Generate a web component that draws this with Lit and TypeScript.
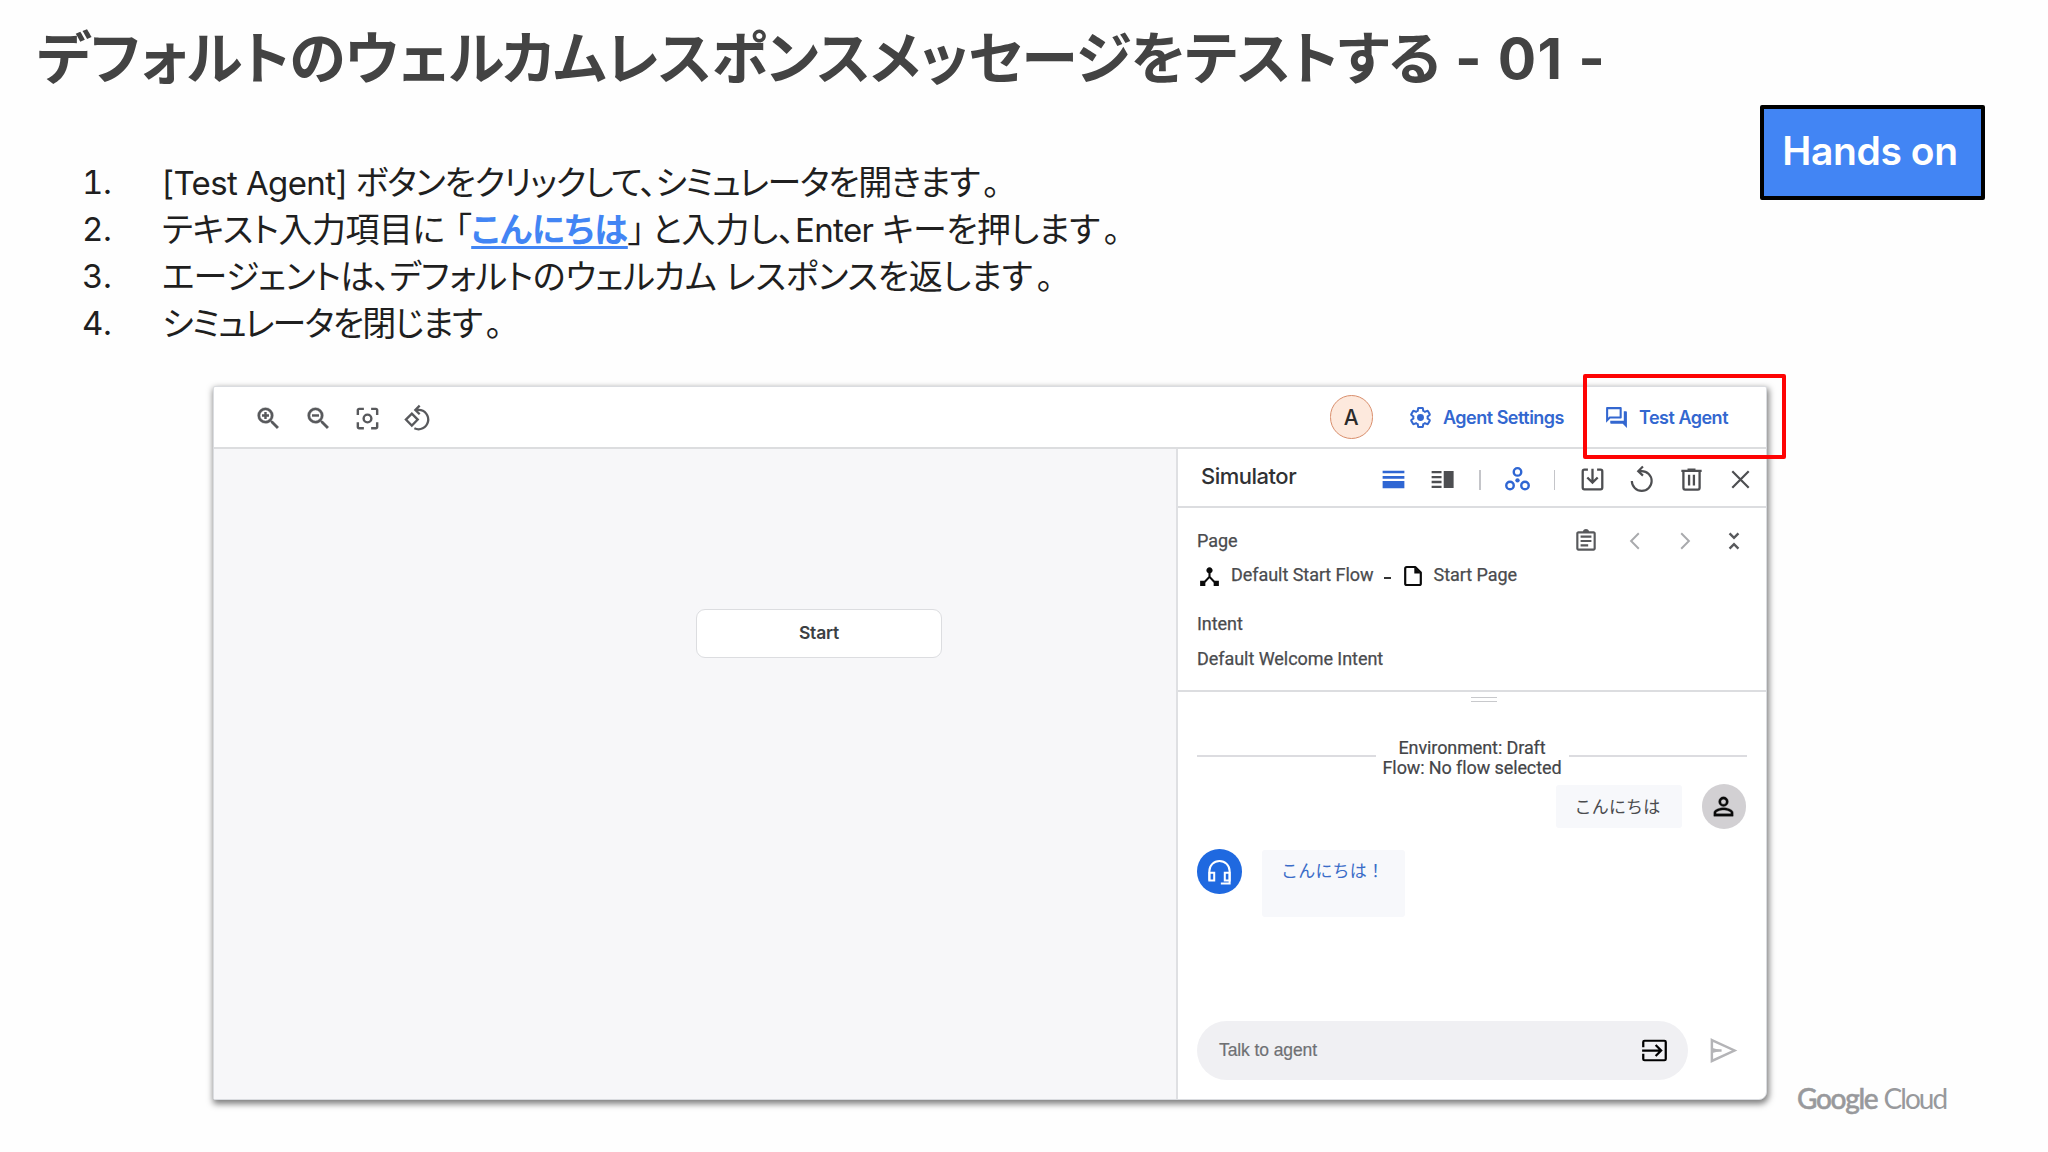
import { LitElement, html, css, svg } from "lit";
import { customElement } from "lit/decorators.js";

const GEAR =
  "M19.43 12.98c.04-.32.07-.64.07-.98s-.03-.66-.07-.98l2.11-1.65c.19-.15.24-.42.12-.64l-2-3.46c-.09-.16-.26-.25-.44-.25-.06 0-.12.01-.17.03l-2.49 1c-.52-.4-1.08-.73-1.69-.98l-.38-2.65C14.46 2.18 14.25 2 14 2h-4c-.25 0-.46.18-.49.42l-.38 2.65c-.61.25-1.17.59-1.69.98l-2.49-1c-.06-.02-.12-.03-.18-.03-.17 0-.34.09-.43.25l-2 3.46c-.13.22-.07.49.12.64l2.11 1.65c-.04.32-.07.65-.07.98s.03.66.07.98l-2.11 1.65c-.19.15-.24.42-.12.64l2 3.46c.09.16.26.25.44.25.06 0 .12-.01.17-.03l2.49-1c.52.4 1.08.73 1.69.98l.38 2.65c.03.24.24.42.49.42h4c.25 0 .46-.18.49-.42l.38-2.65c.61-.25 1.17-.59 1.69-.98l2.49 1c.06.02.12.03.18.03.17 0 .34-.09.43-.25l2-3.46c.12-.22.07-.49-.12-.64l-2.11-1.65z";
const LENS =
  "M15.5 14h-.79l-.28-.27A6.47 6.47 0 0 0 16 9.5 6.5 6.5 0 1 0 9.5 16c1.61 0 3.09-.59 4.23-1.57l.27.28v.79l5 4.99L20.49 19l-4.99-5zm-6 0a4.5 4.5 0 1 1 0-9 4.5 4.5 0 0 1 0 9z";

/* Every icon is drawn on a 24-unit grid. */
const ICONS = {
  zoomIn: svg`<path d=${LENS} stroke="currentColor" stroke-width=".3"/><path d="M8.500 6.600h2v1.900h1.900v2h-1.900v1.900h-2v-1.900H6.600V8.500h1.900z"/>`,
  zoomOut: svg`<path d=${LENS} stroke="currentColor" stroke-width=".3"/><path d="M6.600 8.500h5.800v2H6.600z"/>`,
  focus: svg`<path d="M5 15H3v4c0 1.1.9 2 2 2h4v-2H5v-4zM5 5h4V3H5c-1.1 0-2 .9-2 2v4h2V5zm14-2h-4v2h4v4h2V5c0-1.1-.9-2-2-2zm0 16h-4v2h4c1.1 0 2-.9 2-2v-4h-2v4z"/><circle cx="12" cy="12" r="3.200" fill="none" stroke="currentColor" stroke-width="2"/>`,
  rotate: svg`<g fill="none" stroke="currentColor" stroke-width="1.900"><path d="M7.300 8 12.200 12.900 7.300 17.800 2.400 12.900z"/><path d="M10.500 4.900h2.500a8 8 0 1 1-3.600 15.200M13.800 1.300 10.200 4.900l3.600 3.600"/></g>`,
  gear: svg`<path d=${GEAR} fill="none" stroke="currentColor" stroke-width="2.100"/><circle cx="12" cy="12" r="3.600"/>`,
  forum: svg`<path d="M15 4v7H5.170L4 12.170V4h11m1-2H3c-.55 0-1 .45-1 1v14l4-4h10c.55 0 1-.45 1-1V3c0-.55-.45-1-1-1zm5 4h-2v9H6v2c0 .55.45 1 1 1h11l4 4V7c0-.55-.45-1-1-1z"/>`,
  rows: svg`<path d="M3 4.800h18v2.100H3zM3 9.200h18v2.200H3zM3 13.300h18V19.200H3z"/>`,
  split: svg`<path d="M3 4.900h8.200v1.900H3zM3 9h8.200v1.900H3zM3 13.100h8.200V15H3zM3 17.200h8.200v1.900H3zM13 4.900h8.200v14.200H13z"/>`,
  nodes: svg`<g fill="none" stroke="currentColor" stroke-width="2"><circle cx="12" cy="5.700" r="3.100"/><circle cx="5.800" cy="16.900" r="3.100"/><circle cx="18.200" cy="16.900" r="3.100"/></g><circle cx="12" cy="12.700" r="1.800"/>`,
  save: svg`<g fill="none" stroke="currentColor" stroke-width="1.900"><path d="M8.200 3.900H5.300Q3.900 3.900 3.900 5.300V18.700Q3.900 20.100 5.300 20.100H18.700Q20.100 20.100 20.100 18.700V5.300Q20.100 3.900 18.700 3.900H15.800"/><path d="M12 3v11.300M7.700 10.300 12 14.600l4.300-4.300"/></g>`,
  replay: svg`<g fill="none" stroke="currentColor" stroke-width="1.800"><path d="M4 13.200a8.200 8.200 0 1 0 8.200-8.200H9.300M13.200 1.300 9.300 5.100l3.900 3.700"/></g>`,
  trash: svg`<g fill="none" stroke="currentColor" stroke-width="1.900"><path d="M3.600 4.800h16.800M8.700 3.800h6.600"/><path d="M5.300 5.500V18.900Q5.300 20.300 6.700 20.300H17.300Q18.700 20.300 18.700 18.900V5.500M10 8.100v8.900M14 8.100v8.900"/></g>`,
  close: svg`<path d="M5.200 5.200 18.800 18.800M18.800 5.200 5.200 18.800" fill="none" stroke="currentColor" stroke-width="1.800"/>`,
  clipboard: svg`<path d="M7 15h7v2H7zm0-4h10v2H7zm0-4h10v2H7zm12-4h-4.180C14.400 1.840 13.300 1 12 1c-1.300 0-2.400.84-2.820 2H5c-1.100 0-2 .9-2 2v14c0 1.100.9 2 2 2h14c1.100 0 2-.9 2-2V5c0-1.100-.9-2-2-2zm0 16H5V5h14v14z"/>`,
  prev: svg`<path d="M15.500 4.900 8.400 12l7.100 7.100" fill="none" stroke="currentColor" stroke-width="1.800"/>`,
  next: svg`<path d="M8.500 4.900 15.600 12l-7.100 7.100" fill="none" stroke="currentColor" stroke-width="1.800"/>`,
  collapse: svg`<path d="M7.900 4.900 12 9l4.100-4.100M7.900 19.100 12 15l4.100 4.100" fill="none" stroke="currentColor" stroke-width="2.200"/>`,
  flow: svg`<path d="M17 16l-4-4V8.820C14.160 8.400 15 7.300 15 6c0-1.660-1.340-3-3-3S9 4.340 9 6c0 1.300.84 2.400 2 2.820V12l-4 4H3v5h5v-3.050l4-4.200 4 4.200V21h5v-5h-4z"/>`,
  doc: svg`<path d="M14.200 3H5.800Q4.200 3 4.200 4.600V19.400Q4.200 21 5.800 21H18.200Q19.800 21 19.800 19.400V8.600z" fill="none" stroke="currentColor" stroke-width="2.200" stroke-linejoin="round"/><path d="M13.300 3v6.500h6.300z"/>`,
  person: svg`<path d="M12 5.900a2.100 2.100 0 1 1 0 4.200 2.100 2.100 0 0 1 0-4.200m0 9c2.970 0 6.100 1.460 6.100 2.100v1.100H5.900V17c0-.64 3.130-2.100 6.100-2.100M12 4a4 4 0 1 0 0 8 4 4 0 0 0 0-8zm0 9c-2.670 0-8 1.340-8 4v3h16v-3c0-2.660-5.330-4-8-4z" stroke="currentColor" stroke-width=".3"/>`,
  headset: svg`<g fill="none" stroke="currentColor" stroke-width="1.800"><path d="M3 20V11.600a9 9 0 0 1 18 0V22.600H13.200"/><path d="M3 13.200H7.300V20H3zM16.700 13.200H21V20h-4.300z"/></g>`,
  input: svg`<g fill="none" stroke="currentColor" stroke-width="2"><path d="M2 8.800V3.700Q2 2.500 3.200 2.500H20.800Q22 2.500 22 3.700V20.300Q22 21.500 20.800 21.500H3.200Q2 21.500 2 20.300V15.200" transform="matrix(1 0 0 .92 0 .96)"/><path d="M1 12H18M13 7.100 17.900 12l-4.900 4.900"/></g>`,
  send: svg`<g fill="none" stroke="currentColor" stroke-width="1.900"><path d="M3 3.900 20.500 12 3 20.100zM3 12h7.500"/><path d="M3.500 10 10.500 12 3.500 14z" fill="currentColor" stroke="none"/></g>`,
};

const icon = (name: keyof typeof ICONS, size = 29) =>
  html`<svg class="icon" width=${size} height=${size} viewBox="0 0 24 24" fill="currentColor">${ICONS[name]}</svg>`;

const stop = html`<span class="stop">。</span>`;

@customElement("app-root")
export class AppRoot extends LitElement {
  static styles = css`
    :host {
      display: block; box-sizing: border-box; width: 2048px; height: 1152px; overflow: hidden; position: relative;
      background: #fefefe; color: #202124; font-family: Inter, "Noto Sans CJK JP", sans-serif; white-space: nowrap;
    }
    .icon { display: block; flex: none; }
    .jp { font-feature-settings: "palt"; }
    h1 { margin: 0; padding: 24px 0 0 37px; height: 68px; line-height: 70px; font-size: 57px; font-weight: 700; color: #434343; letter-spacing: -0.5px; }
    .suffix { letter-spacing: 1.3px; }
    .intro { display: flex; justify-content: space-between; align-items: flex-start; height: 294px; padding: 13px 63px 0 82px; box-sizing: border-box; }
    .steps { margin: 0; padding: 54px 0 0; list-style: none; font-size: 34px; line-height: 47px; color: #1f1f1f; }
    .steps li { display: flex; height: 47px; }
    .no { width: 80px; flex: none; font-size: 33px; font-feature-settings: "tnum"; letter-spacing: -0.5px; }
    .latin { font-size: 33px; letter-spacing: -0.6px; }
    .s1 { letter-spacing: -1.3px; }
    .s2 { letter-spacing: -0.5px; }
    .s2b { letter-spacing: -0.1px; }
    .s2c { letter-spacing: -0.6px; }
    .s3a { letter-spacing: -0.8px; }
    .s3 { letter-spacing: -0.3px; }
    .s4 { letter-spacing: -1.7px; }
    .stop { margin-left: 4px; }
    .word { color: #4285f4; font-weight: 700; text-decoration: underline; text-decoration-thickness: 3px; text-underline-offset: 4px; }
    .open { margin-left: 10px; }
    .close { margin-right: 7px; }
    .badge {
      display: flex; align-items: center; justify-content: center; box-sizing: border-box; width: 225px; height: 95px;
      padding: 0 5px 4px 0; border: 4px solid #000; border-radius: 2px; background: #4285f4; color: #fff;
      font-size: 39px; font-weight: 600; letter-spacing: -0.4px;
    }
    .stage { display: flex; align-items: flex-end; padding-left: 213px; }
    .frame {
      display: flex; flex-direction: column; box-sizing: border-box; width: 1554px; height: 714px; background: #fff;
      border: 1px solid #dadce0; border-radius: 2px 2px 8px 2px; box-shadow: 1px 3px 6px 1px rgba(0, 0, 0, 0.5);
    }
    .bar { display: flex; align-items: center; height: 60px; border-bottom: 2px solid #dcdddf; color: #58595c; padding-left: 40px; }
    .tools { display: flex; gap: 20.6px; flex: 1; padding-top: 2px; }
    .agent {
      display: flex; align-items: center; justify-content: center; box-sizing: border-box; width: 43.5px; height: 43.5px;
      border: 1.5px solid #d98e6c; border-radius: 50%; background: #fde9dd; color: #2b2b2b; font-size: 21px; font-weight: 500;
    }
    .action { display: flex; align-items: center; color: #3367d0; font-size: 18px; font-weight: 600; letter-spacing: -0.5px; }
    .settings { margin-left: 36px; gap: 11px; width: 195px; }
    .test { gap: 10px; width: 162px; }
    .body { display: flex; flex: 1; min-height: 0; }
    .canvas {
      display: flex; flex: 1; justify-content: center; align-items: flex-start; box-sizing: border-box;
      padding: 160px 0 0 248px; background: #f7f7f9; border-right: 2px solid #dfe0e3;
    }
    .start {
      display: flex; align-items: center; justify-content: center; box-sizing: border-box; width: 246px; height: 49px;
      border: 1px solid #dcdde0; border-radius: 9px; background: #fff; color: #3c4043;
      font-size: 17.5px; font-weight: 600; letter-spacing: -0.2px; padding-bottom: 2px;
    }
    .sim { display: flex; flex-direction: column; width: 588px; flex: none; }
    .simhead { display: flex; align-items: center; justify-content: space-between; height: 57px; border-bottom: 2px solid #dcdde0; padding: 0 11px 0 23px; color: #4d4e51; }
    .simtitle { font-size: 22px; font-weight: 500; letter-spacing: -0.5px; color: #303134; margin-top: -3px; }
    .blue { color: #2f66d3; }
    .icons { display: flex; align-items: center; }
    .simhead > .icons { padding-top: 4px; }
    .g { gap: 20.5px; }
    .sep { width: 1.5px; height: 20px; background: #c4c5c9; margin: 0 22px 0 22px; }
    .sepb { margin: 0 22.5px 0 22px; }
    .info {
      box-sizing: border-box; height: 184px; border-bottom: 2px solid #dcdde0; padding: 20px 19px 0;
      font: 18px/26px Roboto, sans-serif; color: #4a4b4e; -webkit-text-stroke: 0.25px #4a4b4e; letter-spacing: -0.05px;
    }
    .row { display: flex; justify-content: space-between; height: 35px; align-items: flex-start; }
    .nav { display: flex; gap: 23.3px; align-items: center; color: #58595c; }
    .faint { color: #a9aaad; }
    .crumbs { display: flex; align-items: center; height: 26px; margin: -1px 0 23px; }
    .crumbs svg { color: #0a0a0a; margin-top: 2px; }
    .dash { width: 7px; height: 2px; margin: 5px 10px 0 10px; background: #333; }
    .c1 { margin-left: 9px; }
    .c2 { margin-left: 9px; }
    .chat { display: flex; flex-direction: column; flex: 1; padding: 0 19px; }
    .grip { align-self: center; width: 26px; height: 3px; margin: 5px 0 0 23px; border-top: 1.5px solid #c8c9cc; border-bottom: 1.5px solid #c8c9cc; }
    .env {
      display: flex; align-items: center; margin-top: 36px; height: 40px; font: 18px/19.7px Roboto, sans-serif;
      color: #444548; -webkit-text-stroke: 0.2px #444548; letter-spacing: -0.1px; text-align: center;
    }
    .env::before, .env::after { content: ""; flex: 1; height: 2px; background: #dcdce0; margin-top: -5px; }
    .envtext { width: 193px; }
    .me { display: flex; justify-content: flex-end; align-items: center; margin-top: 6px; padding-right: 1px; gap: 20px; height: 45px; }
    .bubble { box-sizing: border-box; background: #f7f8fb; font-size: 17px; border-radius: 3px; font-family: "Noto Sans CJK JP", sans-serif; }
    .mine { width: 126px; height: 43px; line-height: 41px; padding-left: 19px; color: #4a4b4e; letter-spacing: 0.2px; }
    .avatar { display: flex; align-items: center; justify-content: center; width: 44.5px; height: 44.5px; border-radius: 50%; background: #d2d0d3; color: #0a0a0a; flex: none; }
    .bot { display: flex; gap: 20.5px; margin-top: 20px; }
    .bot .avatar { background: #1f69e0; color: #fff; }
    .theirs { width: 143px; height: 67px; line-height: 39px; margin-top: 1px; padding-left: 19px; color: #3a6cc8; letter-spacing: 0.2px; }
    .compose { display: flex; align-items: center; margin-top: auto; margin-bottom: 19px; gap: 20px; }
    .field {
      display: flex; align-items: center; justify-content: space-between; box-sizing: border-box; width: 491px; height: 59px;
      border-radius: 30px; background: #f0f0f3; padding: 0 20px 0 22px; color: #6f7073; font: 17.5px "Liberation Sans", sans-serif;
      -webkit-text-stroke: 0.2px #6f7073; letter-spacing: -0.1px;
    }
    .field svg { color: #000; }
    .compose > svg { color: #b4b4b7; }
    .brand { display: flex; gap: 6px; margin: 0 0 -16px 30px; font: 28px/36px Lato, sans-serif; letter-spacing: -1.3px; color: #98999c; }
    .brand b { font-weight: 500; -webkit-text-stroke: 0.5px #98999c; }
    .brand span { letter-spacing: -1.9px; }
    .mark { position: absolute; left: 1583px; top: 374px; box-sizing: border-box; width: 203px; height: 85px; border: 4px solid #fe0303; border-radius: 2px; }
  `;

  render() {
    return html`
      <h1><span class="jp">デフォルトのウェルカムレスポンスメッセージをテストする</span><span class="suffix"> - 01 -</span></h1>
      <section class="intro">
        <ol class="steps">
          <li><span class="no">1.</span><span><span class="latin">[Test Agent] </span><span class="jp s1">ボタンをクリックして、シミュレータを開きます${stop}</span></span></li>
          <li><span class="no">2.</span><span><span class="jp s2">テキスト入力項目に<span class="open">「</span></span><span class="jp word">こんにちは</span><span class="jp s2b"><span class="close">」</span>と入力し、</span><span class="latin">Enter </span><span class="jp s2c">キーを押します${stop}</span></span></li>
          <li><span class="no">3.</span><span><span class="jp s3a">エージェントは、</span><span class="jp s3">デフォルトのウェルカム レスポンスを返します${stop}</span></span></li>
          <li><span class="no">4.</span><span class="jp s4">シミュレータを閉じます${stop}</span></li>
        </ol>
        <div class="badge">Hands on</div>
      </section>
      <section class="stage">
        <div class="frame">
          <div class="bar">
            <div class="tools">${icon("zoomIn")}${icon("zoomOut")}${icon("focus")}${icon("rotate")}</div>
            <div class="agent">A</div>
            <div class="action settings">${icon("gear", 23)}<span>Agent Settings</span></div>
            <div class="action test">${icon("forum", 25)}<span>Test Agent</span></div>
          </div>
          <div class="body">
            <div class="canvas"><div class="start">Start</div></div>
            <div class="sim">
              <div class="simhead">
                <span class="simtitle">Simulator</span>
                <div class="icons">
                  <div class="icons g"><span class="blue">${icon("rows")}</span>${icon("split")}</div>
                  <i class="sep"></i><span class="blue">${icon("nodes")}</span><i class="sep sepb"></i>
                  <div class="icons g">${icon("save")}${icon("replay")}${icon("trash")}${icon("close")}</div>
                </div>
              </div>
              <div class="info">
                <div class="row"><span>Page</span><div class="nav">${icon("clipboard", 26)}<span class="faint">${icon("prev", 26)}</span><span class="faint">${icon("next", 26)}</span>${icon("collapse", 26)}</div></div>
                <div class="crumbs">${icon("flow", 25)}<span class="c1">Default Start Flow</span><i class="dash"></i>${icon("doc", 24)}<span class="c2">Start Page</span></div>
                <div class="row">Intent</div>
                <div>Default Welcome Intent</div>
              </div>
              <div class="chat">
                <div class="grip"></div>
                <div class="env"><div class="envtext">Environment: Draft<br />Flow: No flow selected</div></div>
                <div class="me"><div class="bubble mine">こんにちは</div><div class="avatar">${icon("person", 29)}</div></div>
                <div class="bot"><div class="avatar">${icon("headset", 27)}</div><div class="bubble theirs">こんにちは！</div></div>
                <div class="compose"><div class="field"><span>Talk to agent</span>${icon("input", 27)}</div>${icon("send", 31)}</div>
              </div>
            </div>
          </div>
        </div>
        <div class="brand"><b>Google</b><span>Cloud</span></div>
      </section>
      <div class="mark"></div>
    `;
  }
}
